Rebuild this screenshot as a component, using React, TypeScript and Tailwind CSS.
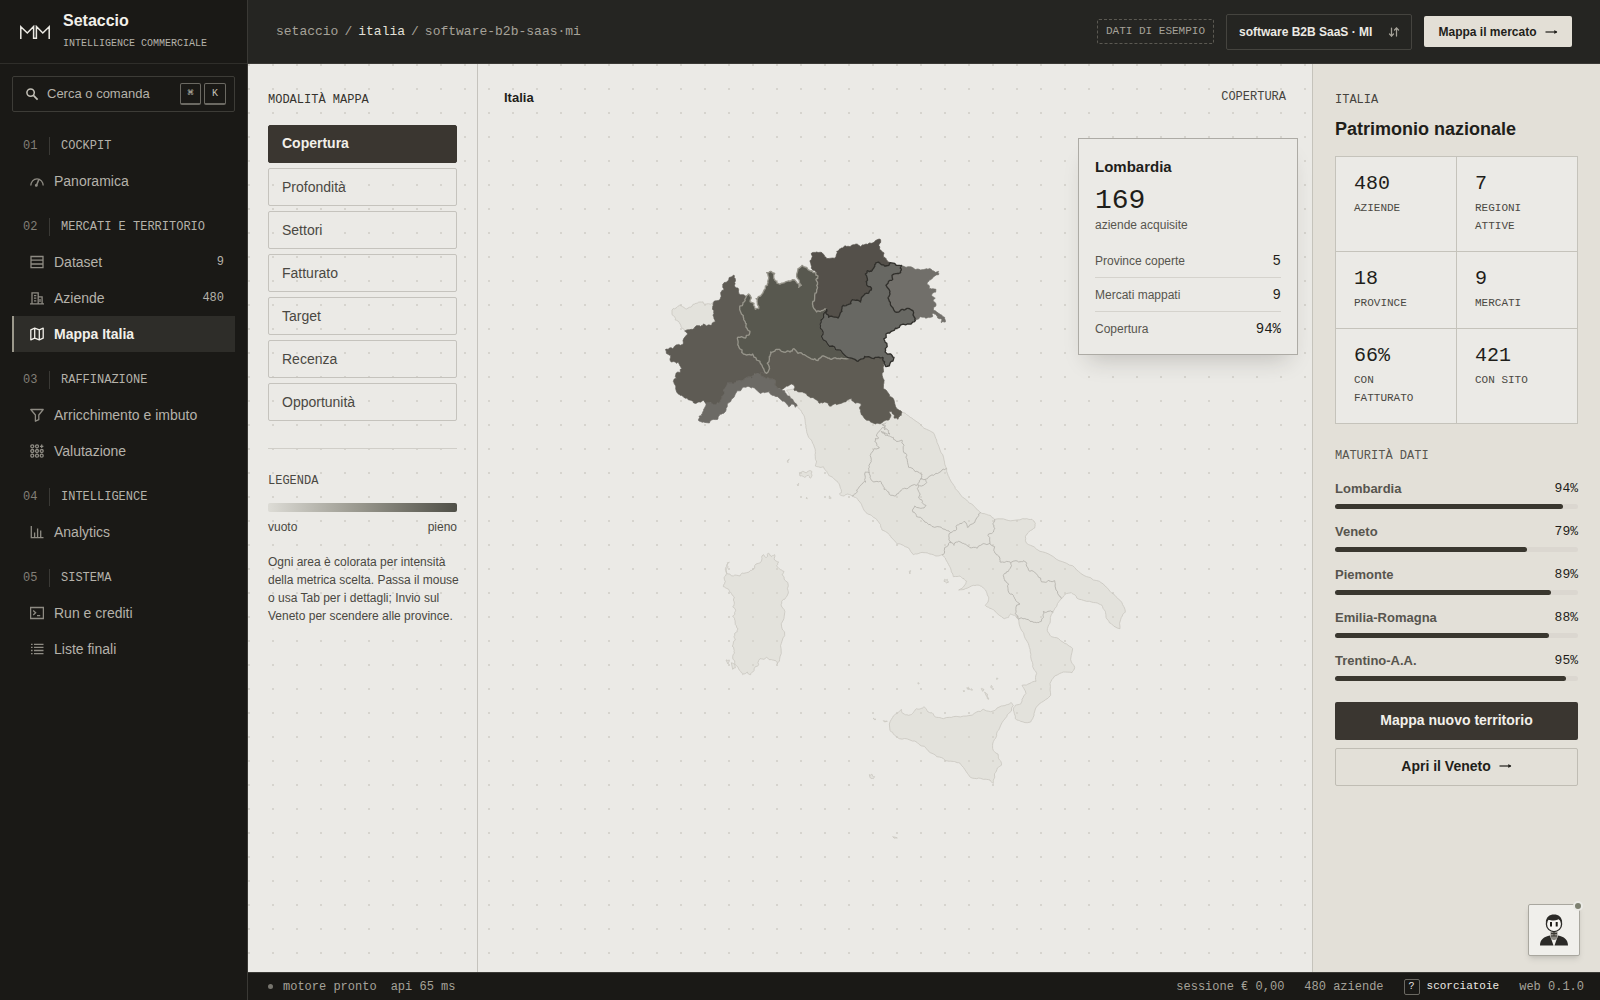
import type { ReactNode } from "react";
import { ArrowDownUp } from "lucide-react";

const mono = "font-['Liberation_Mono','Courier_New',monospace]";

/* ---------- Icone ---------- */

function Icon({ children }: { children: ReactNode }) {
    return (
        <svg viewBox="0 0 14 14" className="size-[14px] shrink-0" fill="none" stroke="currentColor" strokeWidth="1.3" aria-hidden="true">
            {children}
        </svg>
    );
}

function Arrow() {
    return (
        <svg viewBox="0 0 13 8" className="h-2 w-[13px] shrink-0" fill="none" stroke="currentColor" strokeWidth="1.2" aria-hidden="true">
            <path d="M.5 4h11.500" />
            <path d="M9.300 2 12.300 4 9.300 6z" fill="currentColor" stroke="none" />
        </svg>
    );
}

const icons = {
    search: (
        <Icon>
            <circle cx="5.600" cy="5.600" r="3.700" strokeWidth="1.500" />
            <path d="M8.400 8.400 12.600 12.600" strokeWidth="1.700" />
        </Icon>
    ),
    gauge: (
        <Icon>
            <path d="M.8 11.6C.8 8 3.500 4.800 7 4.800s6.200 3.200 6.200 6.800" />
            <path d="M6.300 11.800 8.800 5.600" strokeWidth="1.500" />
            <circle cx="6.300" cy="11.400" r=".8" fill="currentColor" />
        </Icon>
    ),
    dataset: (
        <Icon>
            <path d="M1 1.500h12v11.200H1zM1 5.200h12M1 9h12" />
        </Icon>
    ),
    building: (
        <Icon>
            <path d="M0 12.800h14M2 12.800V1.800h6.200v11M8.200 5.800h3.900v7M4 4.600h2.300M4 7.200h2.300M4 9.800h2.300M10 8v3" />
        </Icon>
    ),
    map: (
        <Icon>
            <path d="M.8 2.800 4.700 1.200l4.600 1.600 3.900-1.600v10L9.300 12.800 4.700 11.200.8 12.800zM4.700 1.200v10M9.300 2.800v10" strokeLinejoin="round" />
        </Icon>
    ),
    funnel: (
        <Icon>
            <path d="M.8 1.500h12.400L8.800 7v4.700l-3.400 1.500V7z" strokeLinejoin="round" />
        </Icon>
    ),
    grid: (
        <Icon>
            {[2.3, 7, 11.7].map((y) =>
                [2.3, 7, 11.7].map((x) =>
                    x > 10 && y < 3 ? <path key={`${x}-${y}`} d="M11.700 .6v3.400M10 2.300h3.400" /> : <circle key={`${x}-${y}`} cx={x} cy={y} r="1.500" />,
                ),
            )}
        </Icon>
    ),
    chart: (
        <Icon>
            <path d="M1.300 1v11.700H13.500M4.600 12V7.500M7.600 12V3.500M10.700 12V5.500" />
        </Icon>
    ),
    terminal: (
        <Icon>
            <path d="M.6 1.500h12.800v11H.6zM3.200 4.600 5.600 6.800 3.200 9M7 9.600h3.200" />
        </Icon>
    ),
    list: (
        <Icon>
            <path d="M4 2.300h9.500M4 5.400h9.500M4 8.500h9.500M4 11.600h9.500M1 2.300h1.600M1 5.400h1.600M1 8.500h1.600M1 11.600h1.600" />
        </Icon>
    ),
};

/* ---------- Dati ---------- */

const groups = [
    { n: "01", title: "COCKPIT", items: [{ icon: icons.gauge, label: "Panoramica" }] },
    {
        n: "02",
        title: "MERCATI E TERRITORIO",
        items: [
            { icon: icons.dataset, label: "Dataset", count: "9" },
            { icon: icons.building, label: "Aziende", count: "480" },
            { icon: icons.map, label: "Mappa Italia", active: true },
        ],
    },
    {
        n: "03",
        title: "RAFFINAZIONE",
        items: [
            { icon: icons.funnel, label: "Arricchimento e imbuto" },
            { icon: icons.grid, label: "Valutazione" },
        ],
    },
    { n: "04", title: "INTELLIGENCE", items: [{ icon: icons.chart, label: "Analytics" }] },
    {
        n: "05",
        title: "SISTEMA",
        items: [
            { icon: icons.terminal, label: "Run e crediti" },
            { icon: icons.list, label: "Liste finali" },
        ],
    },
] as { n: string; title: string; items: { icon: ReactNode; label: string; count?: string; active?: boolean }[] }[];

const modes = ["Copertura", "Profondità", "Settori", "Fatturato", "Target", "Recenza", "Opportunità"];

const stats = [
    ["480", "AZIENDE"],
    ["7", "REGIONI ATTIVE"],
    ["18", "PROVINCE"],
    ["9", "MERCATI"],
    ["66%", "CON FATTURATO"],
    ["421", "CON SITO"],
];

const maturity: [string, number][] = [
    ["Lombardia", 94],
    ["Veneto", 79],
    ["Piemonte", 89],
    ["Emilia-Romagna", 88],
    ["Trentino-A.A.", 95],
];

/* ---------- Mappa ---------- */

type Pt = [number, number];

const parse = (s: string): Pt[] => {
    const n = s.trim().split(/\s+/).map(Number);
    return n.flatMap((v, i) => (i % 2 ? [] : [[v, n[i + 1]] as Pt]));
};

const rev = (s: string) =>
    parse(s)
        .reverse()
        .map((p) => p.join(" "))
        .join(" ");

const noise = (x: number, y: number) => {
    const v = Math.sin(x * 12.9898 + y * 78.233) * 43758.5453;
    return v - Math.floor(v) - 0.5;
};

// Il punto medio dipende solo dai due estremi: i confini condivisi combaciano
function split(a: Pt, b: Pt, amp: number, depth: number): Pt[] {
    if (depth === 0) return [b];
    const len = Math.hypot(b[0] - a[0], b[1] - a[1]) * amp;
    const sx = a[0] + b[0];
    const sy = a[1] + b[1];
    const m: Pt = [sx / 2 + noise(sx, sy) * len, sy / 2 + noise(sy, sx) * len];
    return [...split(a, m, amp, depth - 1), ...split(m, b, amp, depth - 1)];
}

function trace(s: string, amp = 0.5, closed = true) {
    const pts = parse(s);
    const out: Pt[] = [pts[0]];
    pts.slice(1).forEach((p, i) => out.push(...split(pts[i], p, amp, 2)));
    return "M" + out.map((p) => `${p[0].toFixed(1)} ${p[1].toFixed(1)}`).join("L") + (closed ? "Z" : "");
}

// Confini condivisi
const pieLom = "350 460 338 442 330 428 318 414 308 402 296 404 280 402 276 390 268 384 264 370 262 356 274 350 286 354 298 344 300 334 288 322 286 306 280 292 272 276 270 258 282 246 288 232";
const lomEmi = "350 460 358 440 352 430 358 410 362 396 376 390 388 388 400 396 420 396 432 386 444 400 460 404 476 412 494 416 504 422 518 408 530 412 544 418 560 416 580 416 600 414";
const lomVen = "530 268 520 286 512 300 510 314 516 330 514 350 528 364 548 378 560 390 578 400 600 414";
const lomTre = "498 158 504 168 498 178 500 196 500 214 494 232 488 246 492 266 500 276 514 272 530 268";
const venTre = "720 128 704 138 692 132 678 128 670 146 664 154 652 152 646 162 652 176 650 190 656 200 664 210 654 220 644 222 634 234 632 246 620 240 606 240 594 254 580 256 576 274 564 294 548 290 536 292 528 276 530 268";
const venEmi = "600 414 624 424 640 416 656 410 680 412 698 412";
const venFri = "796 302 792 290 784 270 770 266 756 268 746 276 730 266 722 256 716 238 720 222 718 210 708 196 716 184 728 178 726 166 742 160 754 150 754 136";
const pieLig = "162 540 166 548 190 552 208 548 214 530 222 522 220 508 228 496 232 486 250 492 262 482 282 478 290 472 306 474 312 464 328 460";
const pieVda = "190 248 188 262 192 280 192 297 196 305 186 315 170 318 160 312 152 320 136 320 124 328 104 333";
const ligEmi = "328 460 334 468 348 474 362 476 378 484 376 496 384 504";

const north = [
    { name: "Liguria", fill: "#6c6a65", d: `${pieLig} ${ligEmi} 404 512 408 520 420 530 430 542 442 556 436 562 424 552 416 560 404 546 390 536 372 526 358 514 344 518 322 512 304 504 288 502 272 512 256 522 244 540 232 552 228 570 216 582 204 596 184 600 160 606 146 602 148 588 158 580 164 564 168 552` },
    { name: "Piemonte", fill: "#5e5b54", d: `252 165 240 172 236 180 222 188 218 195 222 207 214 215 212 232 204 242 ${pieVda} 112 340 104 352 100 368 92 376 76 378 68 386 58 384 46 390 52 402 62 406 60 418 66 426 80 430 88 424 90 438 96 446 90 458 78 460 80 476 70 484 76 496 78 510 90 526 104 534 118 540 130 548 148 546 ${pieLig} 344 462 ${pieLom} 276 224 266 210 256 202 254 188 256 176 252 165` },
    { name: "Emilia-Romagna", fill: "#5f5c54", d: `${lomEmi} ${venEmi} 704 426 700 440 696 460 702 484 708 510 718 530 734 550 752 572 754 586 744 598 732 594 726 576 718 574 722 590 708 600 696 608 680 610 662 606 646 598 634 584 630 568 636 556 624 548 616 550 604 534 592 540 578 548 560 554 544 558 530 548 508 550 496 538 478 530 466 520 448 516 434 512 434 500 420 494 408 500 400 506 ${rev(ligEmi)} 344 462` },
    { name: "Trentino-Alto Adige", fill: "#54504a", d: `482 130 486 112 484 100 500 96 516 98 528 112 548 114 558 110 560 94 574 84 584 78 600 80 618 72 632 80 648 72 664 70 676 62 692 60 690 70 684 76 692 90 702 100 700 112 712 122 ${venTre} ${rev(lomTre)} 488 150 484 138` },
    { name: "Friuli-Venezia Giulia", fill: "#716f6a", d: `768 142 790 144 812 150 834 148 848 152 866 154 866 164 850 172 838 180 832 194 838 206 858 208 858 216 844 226 856 234 850 244 858 256 850 270 866 280 884 292 886 306 874 308 872 296 858 284 848 280 848 290 836 292 826 294 810 290 ${venFri}` },
    { name: "Lombardia", fill: "#58584f", stroke: "#96948a", d: `288 232 296 222 304 234 300 242 312 250 316 268 326 266 322 248 318 236 332 228 346 206 354 188 356 172 350 158 362 154 374 160 374 180 388 192 404 188 420 184 434 180 442 190 446 202 454 196 448 182 440 168 444 146 456 136 470 142 486 152 ${lomTre} ${lomVen} ${rev(lomEmi)} ${pieLom}` },
    { name: "Veneto", fill: "#686863", stroke: "#302f2b", d: `${venTre} ${lomVen} ${venEmi} 704 426 706 438 716 438 722 426 732 412 722 402 712 402 706 386 704 362 708 342 724 334 748 322 772 312 ${venFri} 734 130` },
];

const aosta = `66 270 78 264 88 256 98 260 118 262 134 252 150 246 162 252 180 252 ${pieVda} 94 322 88 308 76 300 74 290 66 284`;

const peninsula =
    "112 50 122 60 132 76 136 100 140 124 146 142 158 160 166 180 166 200 170 216 166 228 180 232 190 230 200 244 206 256 220 264 232 274 240 290 244 308 238 312 252 318 262 312 276 318 290 324 300 336 308 352 318 368 334 376 350 388 362 404 366 420 384 430 400 448 412 462 430 466 446 474 460 494 470 492 492 488 510 492 528 498 546 494 556 504 566 524 574 546 580 560 600 558 612 566 620 574 612 588 596 600 616 596 640 586 658 586 670 594 680 608 686 622 684 636 676 646 688 654 704 662 718 676 734 686 746 682 752 672 764 676 776 688 " +
    "782 716 796 746 808 772 812 800 818 830 830 850 828 874 810 880 786 886 792 896 798 910 786 928 782 942 766 946 760 960 766 986 782 994 812 996 822 976 828 952 850 934 872 916 870 880 884 858 910 846 936 848 944 832 934 816 938 776 920 762 896 746 874 740 862 722 870 700 878 668 884 656 904 626 916 612 934 608 944 614 950 624 980 634 1006 638 1026 646 1036 664 1038 682 1048 698 1080 716 1084 682 1096 666 1088 644 1070 622 1050 604 1030 582 1000 570 980 560 950 540 920 520 880 500 840 484 812 466 " +
    "800 460 796 440 806 426 824 414 826 400 816 388 800 386 770 390 740 390 704 388 690 376 676 372 662 368 650 358 640 346 620 330 600 312 586 296 574 276 564 256 560 236 552 210 540 180 530 150 520 128 504 120 484 106 460 88 440 74 422 64 400 60 300 30 200 30 120 0 80 0 90 20";

const innerBorders = [
    "378 98 366 104 374 114 360 122 350 134 356 144 344 154 350 166 358 174 340 182 330 196 334 214 328 232 328 248 316 246 316 264 318 276 306 282 298 290 290 300 284 312 276 318",
    "328 248 332 266 340 276 362 274 368 284 372 298 386 306 404 318 416 310 424 300 440 296 456 286 478 276 484 264",
    "366 104 376 106 372 118 386 122 390 132 378 130 364 124 376 136 392 140 406 150 426 150 432 166 430 182 440 194 442 212 446 232 456 234 474 246 486 252 482 266 496 268 510 258 528 250 546 240 560 236",
    "496 268 500 278 490 286 474 284 474 300 480 312 476 324 486 338 498 346 488 354 464 348 458 366 470 380 490 390 506 404 524 412 544 412 562 422 572 428 586 422 590 406 606 400 612 394 622 412 636 402 650 384 662 368",
    "704 388 698 402 704 416 698 428 684 436 690 460",
    "572 428 568 444 574 458 560 470 554 486 546 494",
    "574 458 582 466 590 456 608 460 620 466 640 472 662 466 690 460 704 470 704 488 716 498 720 516 736 516 752 518 748 538 738 550 730 556 734 572 746 582 744 596 756 612 764 626 780 642 768 654 766 670 776 688 792 686 810 694 830 698 844 694 850 680 850 664 864 664 880 666",
    "752 518 776 516 792 512 800 520 804 534 820 544 836 562 852 576 866 570 884 572 888 600 896 616 904 626",
];

const sardegna =
    "88 66 82 68 84 80 78 90 80 100 100 108 120 108 140 98 156 90 168 72 186 56 190 44 200 52 206 40 214 50 224 44 224 60 236 66 230 76 238 86 252 94 246 104 256 122 264 152 258 172 248 180 244 198 254 218 250 240 248 270 244 310 240 350 232 372 218 360 200 352 180 356 176 374 162 392 152 404 142 396 128 404 122 394 112 380 104 370 98 350 102 334 96 318 106 300 104 280 114 266 106 254 104 240 98 228 106 214 98 200 102 184 94 160 86 148 70 140 76 124 72 112 80 100 76 88 82 72";

const sicilia =
    "568 552 580 528 596 516 604 508 608 520 626 526 640 518 650 506 662 506 672 500 684 516 696 518 710 532 730 536 760 530 800 528 830 516 850 508 876 514 900 500 920 494 934 488 940 496 922 524 906 548 892 574 886 596 878 612 880 632 894 642 896 656 904 676 892 684 884 700 880 720 880 730 870 720 850 718 830 716 808 708 794 688 776 668 756 664 736 662 710 650 684 632 656 612 630 600 598 596 584 586 570 572";

// Isole minori
const islets = [
    "118 248 128 244 140 248 148 242 156 246 156 258 150 264 146 256 134 262 120 258",
    "82 214 88 208 84 218",
    "112 284 116 280 114 288",
    "140 322 142 326 138 324",
    "208 318 214 324 208 326",
    "448 544 452 542 450 552",
    "554 568 562 568 566 576 558 578 552 574",
];
const southIslets = [
    "508 704 516 702 524 710 520 716 510 712",
    "578 890 592 894 582 894",
    "550 542 562 544 554 546",
    "520 534 528 538 522 538",
    "844 446 852 448 848 454",
    "854 456 862 462 866 478 858 466",
    "800 444 806 442 804 448",
    "814 446 818 450 812 450",
    "874 436 876 444 872 442",
    "890 414 894 416 890 418",
    "78 360 88 360 84 372",
    "94 368 104 372 106 384 98 388",
    "790 452 794 452 792 456",
    "654 428 658 430 654 432",
];

function ItalyMap() {
    return (
        <svg viewBox="-516 -252 2502 2508" className="w-full" role="img" aria-label="Mappa delle regioni italiane" strokeLinejoin="round">
            <g fill="#d8d6cf" fillOpacity=".42" stroke="#cac8c1" strokeWidth="2.500">
                <path d={trace(aosta)} />
                <g transform="translate(330 510)">
                    <path d={trace(peninsula, 0.2)} />
                    {islets.map((s) => (
                        <path key={s} d={trace(s)} />
                    ))}
                </g>
                <g transform="translate(150 960)">
                    <path d={trace(sardegna, 0.4)} />
                    <path d={trace(sicilia, 0.25)} />
                    {southIslets.map((s) => (
                        <path key={s} d={trace(s)} />
                    ))}
                </g>
            </g>
            <g transform="translate(330 510)" fill="none" stroke="#b2b0aa" strokeWidth="2.500">
                {innerBorders.map((s) => (
                    <path key={s} d={trace(s, 0.5, false)} />
                ))}
            </g>
            {north.map((r) => (
                <path key={r.name} d={trace(r.d)} fill={r.fill} stroke={r.stroke ?? r.fill} strokeWidth={r.stroke ? 4 : 2}>
                    <title>{r.name}</title>
                </path>
            ))}
        </svg>
    );
}

/* ---------- Pannelli ---------- */

function Sidebar() {
    return (
        <aside className="flex w-[248px] shrink-0 flex-col border-r border-[#3a3935] bg-[#1a1916] text-[#b5b2aa]">
            <div className="flex h-16 items-center gap-[13px] border-b border-[#2f2e2a] pl-5">
                <svg viewBox="0 0 30 14" className="h-[14px] w-[30px] shrink-0" fill="none" stroke="#eceae4" strokeWidth="1.500" aria-hidden="true">
                    <path d="M.8 14V1.800L7.300 8 13.600 1.500V13.200H16.400V1.500L22.800 8 29.200 1.800V14" />
                </svg>
                <div>
                    <div className="text-base leading-5 font-semibold text-[#f2f0ea]">Setaccio</div>
                    <div className={`${mono} mt-[5px] text-[10px] leading-4`}>INTELLIGENCE COMMERCIALE</div>
                </div>
            </div>
            <div className="px-3 pt-3">
                <label className="flex h-9 items-center gap-2 rounded-xs border border-[#3d3c37] pr-2 pl-3 text-[#c4c1b8]">
                    {icons.search}
                    <input
                        type="text"
                        aria-label="Cerca o comanda"
                        placeholder="Cerca o comanda"
                        className="min-w-0 flex-1 bg-transparent text-[13px] outline-none placeholder:text-[#b5b2aa]"
                    />
                    <span className="flex gap-[3px]">
                        <kbd className={`${mono} flex h-[22px] w-[21px] items-center justify-center rounded-xs border border-b-2 border-[#6b6962] text-[10px]`}>⌘</kbd>
                        <kbd className={`${mono} flex h-[22px] w-[22px] items-center justify-center rounded-xs border border-b-2 border-[#6b6962] text-[10px]`}>K</kbd>
                    </span>
                </label>
                <nav className="mt-[6px]">
                    {groups.map((g) => (
                        <div key={g.n}>
                            <div className={`${mono} flex items-center pt-[19px] pb-2 pl-[11px] text-xs leading-[18px]`}>
                                <span className="w-[26px] text-[#827f77]">{g.n}</span>
                                <span className="border-l border-[#3a3935] pl-[11px]">{g.title}</span>
                            </div>
                            {g.items.map((it) => (
                                <a
                                    key={it.label}
                                    href="#"
                                    className={
                                        it.active
                                            ? "flex h-9 items-center gap-[10px] border-l-2 border-[#9b988b] bg-[#2e2d29] pr-[11px] pl-4 text-sm font-semibold text-[#f2f0ea]"
                                            : "flex h-9 items-center gap-[10px] border-l-2 border-transparent pr-[11px] pl-4 text-sm"
                                    }
                                >
                                    <span className={it.active ? "text-[#f2f0ea]" : "text-[#8e8b83]"}>{it.icon}</span>
                                    <span className="flex-1">{it.label}</span>
                                    {it.count && <span className={`${mono} text-xs`}>{it.count}</span>}
                                </a>
                            ))}
                        </div>
                    ))}
                </nav>
            </div>
        </aside>
    );
}

function Header() {
    return (
        <header className="flex h-16 items-center justify-between border-b border-[#3a3935] bg-[#252522] px-7">
            <div className={`${mono} flex gap-[6px] text-[13px] text-[#a5a299]`}>
                <a href="#">setaccio</a>
                <span>/</span>
                <a href="#" className="text-[#e3e0d8]">
                    italia
                </a>
                <span>/</span>
                <span>software-b2b-saas·mi</span>
            </div>
            <div className="flex items-center gap-3">
                <span className={`${mono} rounded-xs border border-dashed border-[#5b5952] px-2 text-[11px] leading-[23px] text-[#a5a299]`}>DATI DI ESEMPIO</span>
                <div className="relative text-[#eceae4]">
                    <select
                        aria-label="Dataset attivo"
                        className="h-9 w-[186px] appearance-none rounded-xs border border-[#45443f] bg-[#252522] pr-7 pl-3 text-xs font-semibold"
                    >
                        <option>software B2B SaaS · MI</option>
                    </select>
                    <ArrowDownUp className="pointer-events-none absolute top-3 right-3 size-3 text-[#a5a299]" strokeWidth={2.5} />
                </div>
                <button className="flex h-[31px] w-[148px] items-center justify-center gap-2 rounded-xs bg-[#e3dfd6] text-xs font-semibold text-[#1f1e1a]">
                    Mappa il mercato <Arrow />
                </button>
            </div>
        </header>
    );
}

function ModePanel() {
    return (
        <section className="w-[230px] shrink-0 border-r border-[#c5c3bd] px-5 pt-[27px] text-[#4a4842]">
            <h2 className={`${mono} text-xs leading-[18px] text-[#35332e]`}>MODALITÀ MAPPA</h2>
            <div className="mt-4 flex flex-col gap-[5px]">
                {modes.map((m, i) => (
                    <button
                        key={m}
                        className={
                            i === 0
                                ? "h-[38px] rounded-xs border border-[#3a3630] bg-[#3a3630] px-[13px] pb-[2px] text-left text-sm font-semibold text-[#f2f0ea]"
                                : "h-[38px] rounded-xs border border-[#c5c3bd] px-[13px] text-left text-sm"
                        }
                    >
                        {m}
                    </button>
                ))}
            </div>
            <hr className="mt-[27px] border-[#d0cec8]" />
            <h2 className={`${mono} mt-[23px] text-xs leading-[18px]`}>LEGENDA</h2>
            <div className="mt-[13px] h-[9px] rounded-xs bg-linear-to-r from-[#dddcd6] via-[#96958b] to-[#4f4f47]" />
            <div className="mt-[6px] flex justify-between text-xs leading-[18px]">
                <span>vuoto</span>
                <span>pieno</span>
            </div>
            <p className="-mr-2 mt-[17px] text-xs leading-[18px]">
                Ogni area è colorata per intensità
                <br />
                della metrica scelta. Passa il mouse
                <br />
                o usa Tab per i dettagli; Invio sul
                <br />
                Veneto per scendere alle province.
            </p>
        </section>
    );
}

function RegionCard() {
    const rows = [
        ["Province coperte", "5"],
        ["Mercati mappati", "9"],
        ["Copertura", "94%"],
    ];
    return (
        <div className="absolute top-[74px] right-[14px] w-[220px] border border-[#adaba5] bg-[#ebeae6] px-4 pt-[18px] pb-2 text-[#1f1e1a] shadow-[0_14px_22px_-10px_rgba(40,38,30,0.22)]">
            <div className="text-[15px] leading-5 font-semibold">Lombardia</div>
            <div className={`${mono} mt-2 text-[28px] leading-8`}>169</div>
            <div className="mb-[11px] text-xs leading-4 text-[#57554e]">aziende acquisite</div>
            <dl className="divide-y divide-[#d5d3cd]">
                {rows.map(([k, v]) => (
                    <div key={k} className="flex h-[34px] items-center justify-between">
                        <dt className="text-xs text-[#57554e]">{k}</dt>
                        <dd className={`${mono} text-sm`}>{v}</dd>
                    </div>
                ))}
            </dl>
        </div>
    );
}

function NationPanel() {
    return (
        <aside className="relative w-72 shrink-0 border-l border-[#c5c3bb] bg-[#e3e0d8] px-[22px] pt-[27px] text-[#1f1e1a]">
            <div className={`${mono} text-xs leading-[18px] text-[#45433d]`}>ITALIA</div>
            <h1 className="mt-2 text-lg leading-6 font-semibold">Patrimonio nazionale</h1>
            <div className="mt-[15px] grid grid-cols-2 gap-px border border-[#c5c3bb] bg-[#c5c3bb]">
                {stats.map(([value, label]) => (
                    <div key={label} className={`${mono} bg-[#ebeae6] px-[18px] pt-[15px] pb-4`}>
                        <div className="text-xl leading-6">{value}</div>
                        <div className="mt-[3px] text-[11px] leading-[18px] text-[#4a4842]">{label}</div>
                    </div>
                ))}
            </div>
            <h2 className={`${mono} mt-[23px] text-xs leading-[18px] text-[#57554e]`}>MATURITÀ DATI</h2>
            <ul className="mt-[14px] flex flex-col gap-[13px]">
                {maturity.map(([name, value]) => (
                    <li key={name}>
                        <div className="flex items-center justify-between leading-5">
                            <span className="text-[13px] font-semibold text-[#57554e]">{name}</span>
                            <span className={`${mono} text-[13px]`}>{value}%</span>
                        </div>
                        <div className="mt-[5px] h-[5px] rounded-full bg-[#dbd7d0]">
                            <div className="h-full rounded-full bg-[#3a372f]" style={{ width: `${value}%` }} />
                        </div>
                    </li>
                ))}
            </ul>
            <div className="mt-[21px] flex flex-col gap-2 text-sm font-semibold">
                <button className="h-[38px] rounded-xs bg-[#3a3630] pb-[2px] text-[#f2f0ea]">Mappa nuovo territorio</button>
                <button className="flex h-[38px] items-center justify-center gap-2 rounded-xs border border-[#c0bdb4] pb-[2px]">
                    Apri il Veneto <Arrow />
                </button>
            </div>
            <button aria-label="Assistente" className="absolute right-5 bottom-4 flex size-[52px] items-center justify-center rounded-xs border border-[#a9a79f] bg-[#f0efeb] shadow-md">
                <svg viewBox="0 0 30 32" className="h-8 w-[30px]" aria-hidden="true">
                    <path d="M1 31.500c0-6 4-9 10-10l3.500 10zM29 31.500c0-6-4-9-10-10l-3.500 10z" fill="#2b2a27" />
                    <path d="M11.500 18h7v6l-2.500 2h-2l-2.500-2z" fill="#8b8983" />
                    <path d="M12 19.500h6M12 22h6M15 18v4" stroke="#3a3833" strokeWidth="1" />
                    <circle cx="15" cy="10" r="7.600" fill="#f6f5f2" stroke="#2b2a27" strokeWidth="1.300" />
                    <path d="M6.800 8.500C7 3 10.500.5 15 .5s8 2.500 8.200 8c-1.500-1-2-2.500-3.400-3.300C17 6.700 10 7 9.400 5.600 8.500 6.300 8 7.500 6.800 8.500z" fill="#2b2a27" />
                    <path d="M12 8v4.500M17.700 8v4.500" stroke="#1f1e1a" strokeWidth="2" />
                </svg>
                <span className="absolute -top-1 -right-1 size-[10px] rounded-full border-2 border-[#ebeae6] bg-[#7d8070]" />
            </button>
        </aside>
    );
}

function StatusBar() {
    return (
        <footer className={`${mono} flex h-7 items-center justify-between border-t border-[#3a3935] bg-[#1a1916] pr-4 pl-5 text-xs text-[#a5a299]`}>
            <div className="flex items-center gap-[14px]">
                <span className="flex items-center gap-[10px]">
                    <span className="size-[5px] rounded-full bg-[#77756e]" />
                    motore pronto
                </span>
                <span>api 65 ms</span>
            </div>
            <div className="flex items-center gap-5">
                <span>sessione € 0,00</span>
                <span>480 aziende</span>
                <span className="flex items-center gap-[7px] text-[11px] text-[#eceae4]">
                    <kbd className={`${mono} flex size-4 items-center justify-center rounded-xs border border-[#6b6962] text-[10px]`}>?</kbd>
                    scorciatoie
                </span>
                <span>web 0.1.0</span>
            </div>
        </footer>
    );
}

export default function App() {
    return (
        <div className="flex min-h-screen bg-[#ebeae6] font-['Liberation_Sans',Arial,sans-serif]">
            <Sidebar />
            <div className="flex min-w-0 flex-1 flex-col">
                <Header />
                {/* Griglia di punti sotto pannello e mappa */}
                <main className="flex flex-1 bg-[radial-gradient(circle_at_1px_1px,#d6d4ce_1px,transparent_0)] bg-size-[24px_24px]">
                    <ModePanel />
                    <section className="relative min-w-0 flex-1">
                        <div className="flex h-[72px] items-start justify-between px-[26px] pt-6">
                            <h2 className="text-[13px] leading-5 font-semibold text-[#1f1e1a]">Italia</h2>
                            <span className={`${mono} text-xs leading-[18px] text-[#45433d]`}>COPERTURA</span>
                        </div>
                        <ItalyMap />
                        <RegionCard />
                    </section>
                    <NationPanel />
                </main>
                <StatusBar />
            </div>
        </div>
    );
}
